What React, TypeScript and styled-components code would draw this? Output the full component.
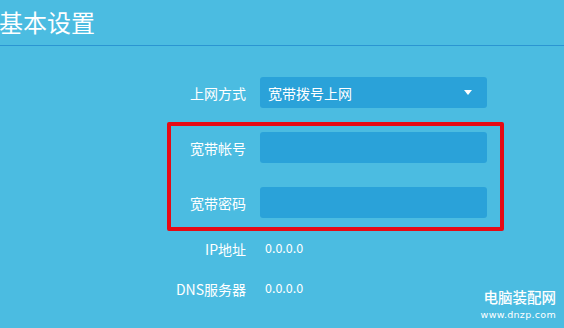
import styled, { createGlobalStyle } from "styled-components";

const GlobalStyle = createGlobalStyle`
  html, body {
    margin: 0;
    padding: 0;
    background: #4bbce1;
  }
  body {
    font-family: "Noto Sans CJK SC", "Liberation Sans", sans-serif;
    color: #fff;
  }
`;

const Page = styled.div`
  position: relative;
  width: 564px;
  height: 328px;
  overflow: hidden;
  background: #4bbce1;
`;

const Header = styled.div`
  height: 46px;
  border-bottom: 1px solid #2b95d2;
  box-sizing: border-box;
  padding-top: 9px;
`;

const Title = styled.h1`
  margin: 0 0 0 -1px;
  font-size: 24px;
  line-height: 26px;
  font-weight: 400;
  color: #fff;
`;

const Form = styled.div`
  display: flex;
  flex-direction: column;
  padding-top: 31px;
`;

const Row = styled.div`
  display: flex;
  align-items: center;
  gap: 14px;
  height: 31px;
  padding-left: 171px;
`;

const Label = styled.div`
  width: 75px;
  flex-shrink: 0;
  display: flex;
  justify-content: flex-end;
  white-space: nowrap;
  font-size: 14px;
  color: #fff;
`;

const Field = styled.div`
  width: 227px;
  height: 31px;
  box-sizing: border-box;
  border-radius: 3px;
  background: #2aa2d9;
  display: flex;
  align-items: center;
  justify-content: space-between;
  padding: 0 15px 0 8px;
  font-size: 14px;
  color: #fff;
`;

const Arrow = styled.span`
  width: 0;
  height: 0;
  border-left: 4px solid transparent;
  border-right: 4px solid transparent;
  border-top: 5px solid #fff;
  margin-top: -1px;
`;

const Highlight = styled.div`
  margin: 14px 0 1px 167px;
  width: 337px;
  height: 109px;
  box-sizing: border-box;
  border: 4px solid #e60a14;
  border-radius: 2px;
  padding-top: 6px;
  display: flex;
  flex-direction: column;
  gap: 24px;
`;

const BoxRow = styled(Row)`
  padding-left: 0;
`;

const Value = styled.div`
  padding-left: 5px;
  font-size: 12.5px;
  margin-top: -3px;
  color: #fff;
`;

const InfoList = styled.div`
  display: flex;
  flex-direction: column;
  gap: 9px;
  margin-top: 1px;
`;

const Watermark = styled.div`
  position: absolute;
  right: 8px;
  bottom: 8px;
  display: flex;
  flex-direction: column;
  align-items: flex-end;
  color: #fff;
`;

const MarkName = styled.div`
  font-size: 14.5px;
  line-height: 16px;
  font-weight: 500;
`;

const MarkUrl = styled.div`
  margin-top: 4px;
  font-family: "DejaVu Sans", sans-serif;
  font-size: 9.5px;
  line-height: 11px;
  letter-spacing: 0.3px;
`;

const App = () => {
  return (
    <Page>
      <GlobalStyle />
      <Header>
        <Title>基本设置</Title>
      </Header>
      <Form>
        <Row>
          <Label>上网方式</Label>
          <Field>
            <span>宽带拨号上网</span>
            <Arrow />
          </Field>
        </Row>
        <Highlight>
          <BoxRow>
            <Label>宽带帐号</Label>
            <Field />
          </BoxRow>
          <BoxRow>
            <Label>宽带密码</Label>
            <Field />
          </BoxRow>
        </Highlight>
        <InfoList>
          <Row>
            <Label>IP地址</Label>
            <Value>0.0.0.0</Value>
          </Row>
          <Row>
            <Label>DNS服务器</Label>
            <Value>0.0.0.0</Value>
          </Row>
        </InfoList>
      </Form>
      <Watermark>
        <MarkName>电脑装配网</MarkName>
        <MarkUrl>www.dnzp.com</MarkUrl>
      </Watermark>
    </Page>
  );
};

export default App;
